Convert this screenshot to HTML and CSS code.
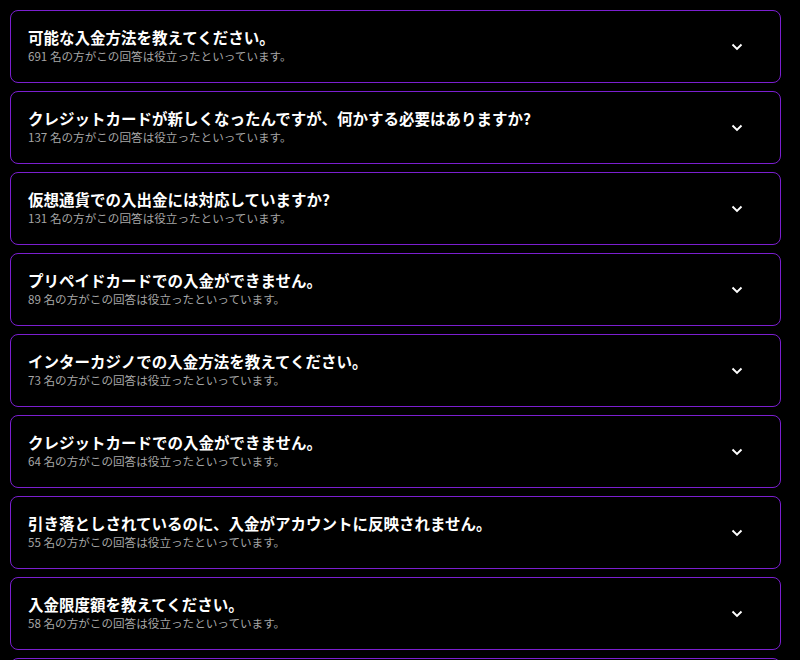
FILE: index.html
```html
<!DOCTYPE html>
<html lang="ja">
<head>
<meta charset="utf-8">
<link rel="stylesheet" href="styles.css">
</head>
<body>
<div class="faq">
  <div class="item"><div class="text"><div class="q">可能な入金方法を教えてください。</div><div class="meta">691 名の方がこの回答は役立ったといっています。</div></div><svg class="chev" viewBox="0 0 12 8"><path d="M1.5 1.5 L6 6 L10.5 1.5"/></svg></div>
  <div class="item"><div class="text"><div class="q">クレジットカードが新しくなったんですが、何かする必要はありますか?</div><div class="meta">137 名の方がこの回答は役立ったといっています。</div></div><svg class="chev" viewBox="0 0 12 8"><path d="M1.5 1.5 L6 6 L10.5 1.5"/></svg></div>
  <div class="item"><div class="text"><div class="q">仮想通貨での入出金には対応していますか?</div><div class="meta">131 名の方がこの回答は役立ったといっています。</div></div><svg class="chev" viewBox="0 0 12 8"><path d="M1.5 1.5 L6 6 L10.5 1.5"/></svg></div>
  <div class="item"><div class="text"><div class="q">プリペイドカードでの入金ができません。</div><div class="meta">89 名の方がこの回答は役立ったといっています。</div></div><svg class="chev" viewBox="0 0 12 8"><path d="M1.5 1.5 L6 6 L10.5 1.5"/></svg></div>
  <div class="item"><div class="text"><div class="q">インターカジノでの入金方法を教えてください。</div><div class="meta">73 名の方がこの回答は役立ったといっています。</div></div><svg class="chev" viewBox="0 0 12 8"><path d="M1.5 1.5 L6 6 L10.5 1.5"/></svg></div>
  <div class="item"><div class="text"><div class="q">クレジットカードでの入金ができません。</div><div class="meta">64 名の方がこの回答は役立ったといっています。</div></div><svg class="chev" viewBox="0 0 12 8"><path d="M1.5 1.5 L6 6 L10.5 1.5"/></svg></div>
  <div class="item"><div class="text"><div class="q">引き落としされているのに、入金がアカウントに反映されません。</div><div class="meta">55 名の方がこの回答は役立ったといっています。</div></div><svg class="chev" viewBox="0 0 12 8"><path d="M1.5 1.5 L6 6 L10.5 1.5"/></svg></div>
  <div class="item"><div class="text"><div class="q">入金限度額を教えてください。</div><div class="meta">58 名の方がこの回答は役立ったといっています。</div></div><svg class="chev" viewBox="0 0 12 8"><path d="M1.5 1.5 L6 6 L10.5 1.5"/></svg></div>
  <div class="item"></div>
</div>
</body>
</html>
```
FILE: styles.css
```css
html, body {
  margin: 0;
  padding: 0;
  background: #000;
}
body {
  font-family: "Noto Sans CJK JP", "Noto Sans", sans-serif;
  color: #fff;
  overflow: hidden;
  height: 660px;
}
.faq {
  padding: 10px 0 0 10px;
  display: flex;
  flex-direction: column;
  gap: 8px;
}
.item {
  box-sizing: border-box;
  width: 771px;
  height: 73px;
  flex: none;
  border: 1px solid #7b1fd0;
  border-radius: 8px;
  display: flex;
  align-items: center;
  justify-content: space-between;
  padding: 0 37px 0 17px;
}
.text {
  display: flex;
  flex-direction: column;
  gap: 2px;
  margin-top: -2px;
}
.q {
  font-size: 15.5px;
  font-weight: 700;
  line-height: 18px;
  color: #fff;
}
.meta {
  font-size: 11.6px;
  line-height: 16px;
  color: #a6a6a6;
}
.chev {
  width: 12px;
  height: 8px;
  fill: none;
  stroke: #fff;
  stroke-width: 1.9;
}
```
